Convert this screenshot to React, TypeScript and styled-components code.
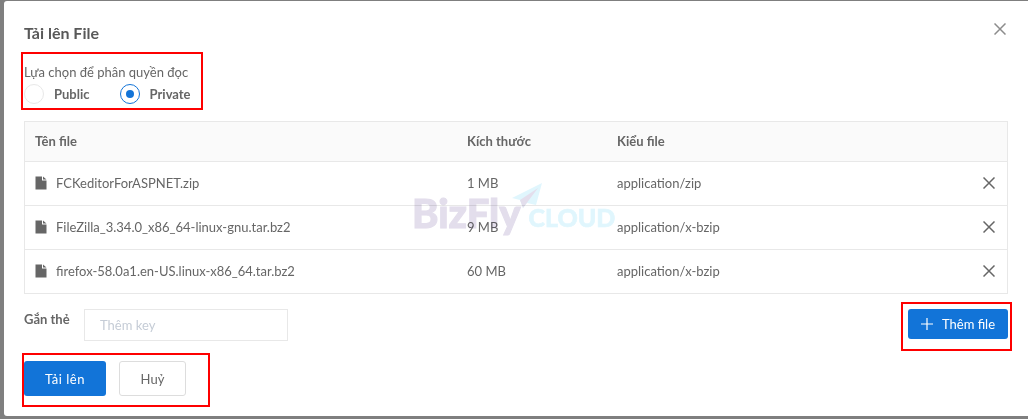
import React from 'react'
import styled, { createGlobalStyle } from 'styled-components'

const files = [
  { name: 'FCKeditorForASPNET.zip', size: '1 MB', type: 'application/zip' },
  { name: 'FileZilla_3.34.0_x86_64-linux-gnu.tar.bz2', size: '9 MB', type: 'application/x-bzip' },
  { name: 'firefox-58.0a1.en-US.linux-x86_64.tar.bz2', size: '60 MB', type: 'application/x-bzip' },
]

const FileIcon = () => (
  <svg width="12" height="14" viewBox="0 0 12 14">
    <path d="M0.5 0.5H7V4.5H11.5V13.5H0.5Z M8 0.5L11.5 3.5H8Z" fill="#666666" />
  </svg>
)

const CrossIcon = ({ size, color }: { size: number; color: string }) => (
  <svg width={size} height={size} viewBox="0 0 12 12">
    <path d="M0.5 0.5L11.5 11.5M11.5 0.5L0.5 11.5" stroke={color} strokeWidth="1.5" fill="none" />
  </svg>
)

export default function App() {
  return (
    <>
      <GlobalStyle />
      <Overlay>
        <Modal>
          <Header>
            <Title>Tải lên File</Title>
            <CloseButton>
              <CrossIcon size={12} color="#8c8c8c" />
            </CloseButton>
          </Header>

          <PermissionBox>
            <PermissionLabel>Lựa chọn để phân quyền đọc</PermissionLabel>
            <RadioRow>
              <RadioOption>
                <Radio />
                <span>Public</span>
              </RadioOption>
              <RadioOption>
                <Radio $checked />
                <span>Private</span>
              </RadioOption>
            </RadioRow>
          </PermissionBox>

          <TableWrap>
            <Table>
              <HeadRow>
                <div>Tên file</div>
                <div>Kích thước</div>
                <div>Kiểu file</div>
                <div />
              </HeadRow>
              {files.map((f) => (
                <Row key={f.name}>
                  <NameCell>
                    <FileIcon />
                    {f.name}
                  </NameCell>
                  <div>{f.size}</div>
                  <div>{f.type}</div>
                  <RemoveCell>
                    <CrossIcon size={12} color="#666666" />
                  </RemoveCell>
                </Row>
              ))}
            </Table>
            <Watermark>
              <WatermarkBiz>BizFly</WatermarkBiz>
              <WatermarkCloud>CLOUD</WatermarkCloud>
              <Plane width="31" height="26" viewBox="0 0 31 26">
                <path d="M30 0L0 15L8 17L11 25L15 20L24 22Z" fill="#e0f6fd" />
                <path d="M8 17L26 5L11 25Z" fill="#e3deec" />
              </Plane>
            </Watermark>
          </TableWrap>

          <TagRow>
            <TagField>
              <TagLabel>Gắn thẻ</TagLabel>
              <TagInput placeholder="Thêm key" />
            </TagField>
            <AddBox>
              <AddButton>
                <svg width="12" height="12" viewBox="0 0 12 12">
                  <path d="M6 0V12M0 6H12" stroke="#ffffff" strokeWidth="1.2" fill="none" />
                </svg>
                Thêm file
              </AddButton>
            </AddBox>
          </TagRow>

          <ActionBox>
            <SubmitButton>Tải lên</SubmitButton>
            <CancelButton>Huỷ</CancelButton>
          </ActionBox>
        </Modal>
      </Overlay>
    </>
  )
}

const GlobalStyle = createGlobalStyle`
  html, body {
    margin: 0;
    padding: 0;
    overflow: hidden;
  }
  body {
    font-family: Lato, "Liberation Sans", sans-serif;
    font-size: 13px;
    color: #666666;
  }
`
const Overlay = styled.div`
  width: 1028px;
  height: 419px;
  box-sizing: border-box;
  padding: 1px 0 3px 4px;
  background: #7f7f7f;
`
const Modal = styled.div`
  height: 415px;
  box-sizing: border-box;
  padding: 0 20px;
  background: #ffffff;
  border-radius: 3px 0 0 3px;
`
const Header = styled.div`
  height: 51px;
  display: flex;
  justify-content: space-between;
  align-items: flex-start;
`
const Title = styled.div`
  margin-top: 23px;
  font-size: 16px;
  line-height: 18px;
  font-weight: 700;
  color: #595959;
`
const CloseButton = styled.div`
  margin-top: 22px;
  margin-right: 2px;
  display: flex;
`
const PermissionBox = styled.div`
  width: 182px;
  height: 58px;
  margin-left: -3px;
  box-sizing: border-box;
  padding: 10px 0 0 1px;
  border: 2px solid #fe0000;
`
const PermissionLabel = styled.div`
  font-size: 13px;
  line-height: 16px;
`
const RadioRow = styled.div`
  display: flex;
  gap: 30px;
  margin-top: 4px;
`
const RadioOption = styled.label`
  display: flex;
  align-items: center;
  gap: 10px;
  font-size: 13px;
  font-weight: 700;
  line-height: 20px;
`
const Radio = styled.span<{ $checked?: boolean }>`
  width: 20px;
  height: 20px;
  box-sizing: border-box;
  border-radius: 50%;
  border: 1px solid ${(p) => (p.$checked ? '#1274d8' : '#e8e8e8')};
  display: flex;
  align-items: center;
  justify-content: center;
  &::after {
    content: '';
    width: 8px;
    height: 8px;
    border-radius: 50%;
    background: ${(p) => (p.$checked ? '#1274d8' : 'transparent')};
  }
`
const TableWrap = styled.div`
  position: relative;
  margin-top: 11px;
  width: 984px;
`
const Table = styled.div`
  border: 1px solid #e8e8e8;
`
const HeadRow = styled.div`
  display: grid;
  grid-template-columns: 432px 150px 1fr 40px;
  height: 39px;
  box-sizing: border-box;
  padding: 0 0 1px 10px;
  align-items: center;
  background: #fafafa;
  font-weight: 700;
`
const Row = styled.div`
  display: grid;
  grid-template-columns: 432px 150px 1fr 40px;
  height: 41px;
  padding: 0 0 2px 10px;
  align-items: center;
  border-top: 1px solid #e8e8e8;
`
const NameCell = styled.div`
  display: flex;
  align-items: center;
  gap: 9px;
`
const RemoveCell = styled.div`
  display: flex;
  justify-content: center;
  padding-left: 4px;
`
const Watermark = styled.div`
  position: absolute;
  left: 388px;
  top: 73px;
  display: flex;
  align-items: flex-end;
  pointer-events: none;
`
const WatermarkBiz = styled.span`
  font-family: Lato, sans-serif;
  font-size: 40px;
  line-height: 38px;
  font-weight: 900;
  color: #e3deec;
  -webkit-text-stroke: 1px #e3deec;
  mix-blend-mode: multiply;
`
const WatermarkCloud = styled.span`
  font-family: Lato, sans-serif;
  font-size: 25px;
  line-height: 30px;
  font-weight: 900;
  color: #e0f6fd;
  -webkit-text-stroke: 0.6px #e0f6fd;
  margin-left: 8px;
  mix-blend-mode: multiply;
`
const Plane = styled.svg`
  position: absolute;
  left: 100px;
  top: -11px;
  mix-blend-mode: multiply;
`
const TagRow = styled.div`
  position: relative;
  width: 984px;
  margin-top: 15px;
  display: flex;
  justify-content: space-between;
`
const TagField = styled.div`
  display: flex;
  align-items: flex-start;
`
const TagLabel = styled.div`
  width: 60px;
  font-weight: 700;
  line-height: 20px;
`
const TagInput = styled.input`
  width: 204px;
  height: 32px;
  box-sizing: border-box;
  padding: 0 15px;
  border: 1px solid #e8e8e8;
  outline: none;
  font-family: inherit;
  font-size: 13px;
  &::placeholder {
    color: #c5ccd6;
  }
`
const AddBox = styled.div`
  position: absolute;
  right: -4px;
  top: -7px;
  width: 111px;
  height: 49px;
  box-sizing: border-box;
  padding: 5px 2px 0 5px;
  border: 2px solid #fe0000;
`
const AddButton = styled.button`
  width: 100px;
  height: 30px;
  padding: 0;
  display: flex;
  align-items: center;
  justify-content: center;
  gap: 9px;
  border: none;
  border-radius: 3px;
  background: #1274d8;
  color: #ffffff;
  font-family: inherit;
  font-size: 13px;
`
const ActionBox = styled.div`
  width: 188px;
  height: 54px;
  margin-top: 12px;
  margin-left: -2px;
  box-sizing: border-box;
  padding: 6px 0 0 0;
  border: 2px solid #fe0000;
  display: flex;
  align-items: flex-start;
  gap: 13px;
`
const SubmitButton = styled.button`
  width: 82px;
  height: 35px;
  border: none;
  border-radius: 3px;
  background: #1274d8;
  color: #ffffff;
  font-family: inherit;
  font-size: 13px;
  letter-spacing: 0.5px;
`
const CancelButton = styled.button`
  width: 67px;
  height: 35px;
  border: 1px solid #dddddd;
  border-radius: 3px;
  background: #ffffff;
  color: #666666;
  font-family: inherit;
  font-size: 13px;
`
